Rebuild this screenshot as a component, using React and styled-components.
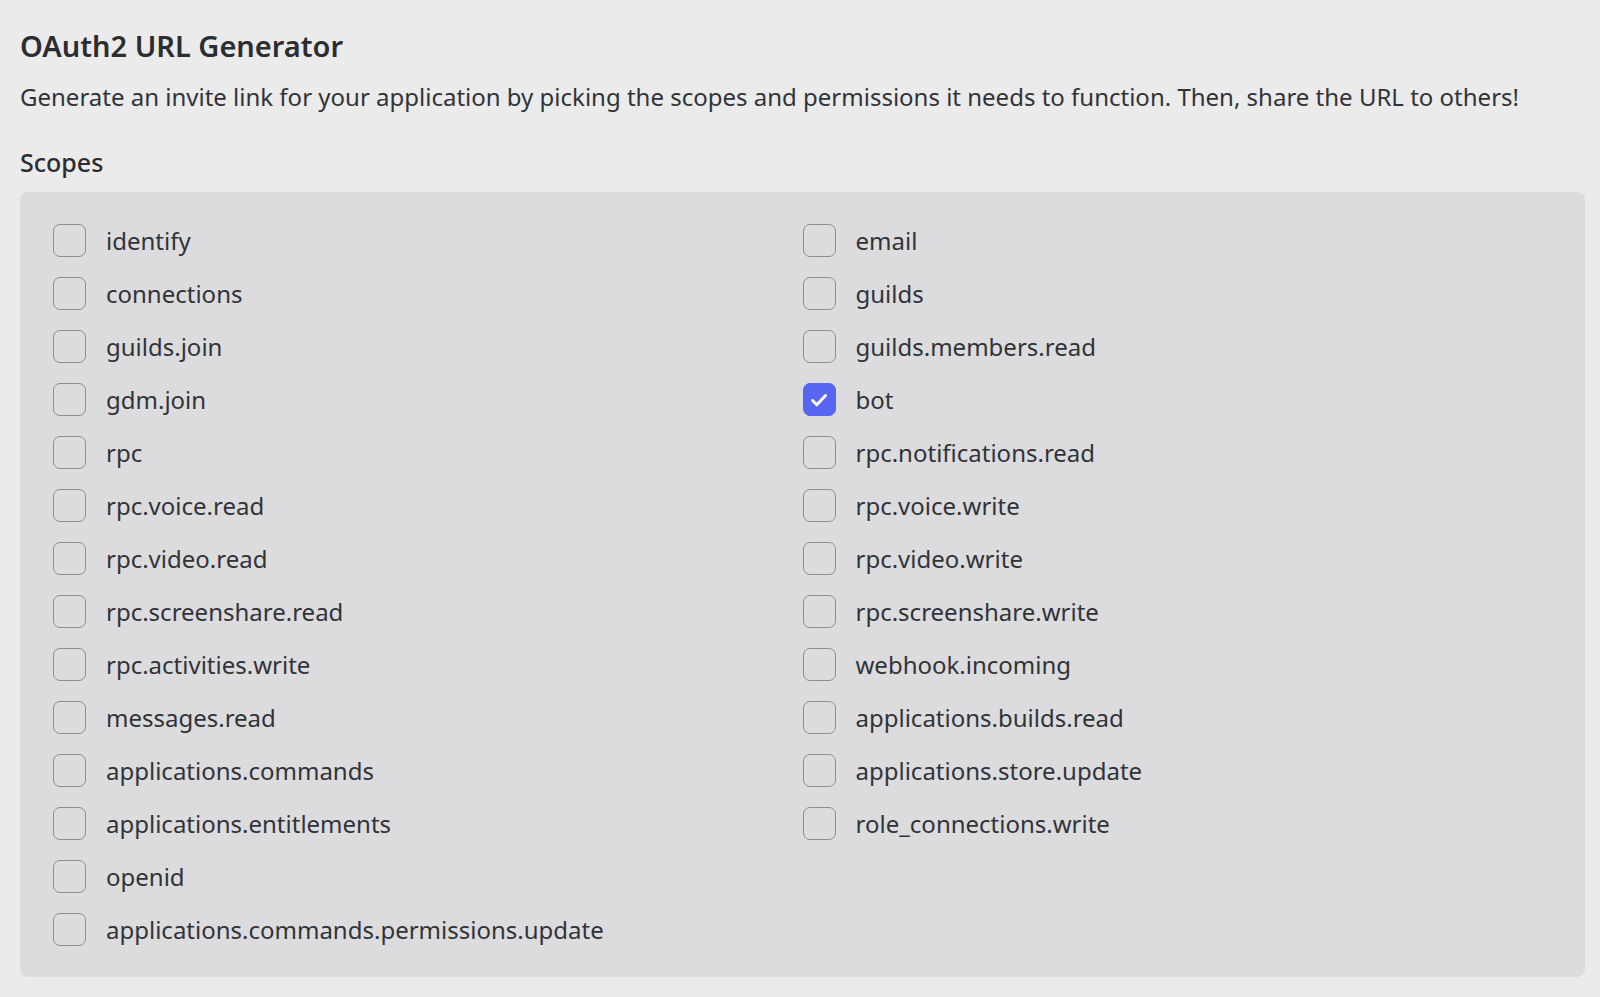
import React from "react";
import styled, { createGlobalStyle } from "styled-components";

const Global = createGlobalStyle`
  html, body { margin: 0; padding: 0; background: #ebebeb; }
  body { font-family: "Noto Sans", "Open Sans", sans-serif; color: #313338; }
`;

const Page = styled.div`
  padding: 28px 15px 20px 20px;
  display: flex;
  flex-direction: column;
`;

const Title = styled.h1`
  margin: 0;
  font-size: 29px;
  font-weight: 600;
  line-height: 36px;
  color: #2b2d31;
`;

const Description = styled.p`
  margin: 17px 0 0;
  font-size: 24px;
  line-height: 32px;
  color: #313338;
`;

const SectionLabel = styled.h2`
  margin: 33px 0 0;
  font-size: 25px;
  font-weight: 500;
  line-height: 32px;
  color: #2b2d31;
`;

const Panel = styled.div`
  margin-top: 14px;
  background: #dcdcde;
  border-radius: 8px;
  padding: 32px 33px 31px;
  display: grid;
  grid-template-columns: 1fr 1fr;
  row-gap: 20px;
`;

const Row = styled.label`
  display: flex;
  align-items: center;
  gap: 20px;
  height: 33px;
  font-size: 24px;
  color: #313338;
`;

const Box = styled.span`
  width: 33px;
  height: 33px;
  box-sizing: border-box;
  border-radius: 7px;
  border: 1.5px solid ${(p) => (p.$checked ? "#5865f2" : "#8d8e93")};
  background: ${(p) => (p.$checked ? "#5865f2" : "#dcdcde")};
  display: flex;
  align-items: center;
  justify-content: center;
  flex-shrink: 0;
`;

const Empty = styled.span``;

const left = [
  "identify",
  "connections",
  "guilds.join",
  "gdm.join",
  "rpc",
  "rpc.voice.read",
  "rpc.video.read",
  "rpc.screenshare.read",
  "rpc.activities.write",
  "messages.read",
  "applications.commands",
  "applications.entitlements",
  "openid",
  "applications.commands.permissions.update",
];
const right = [
  "email",
  "guilds",
  "guilds.members.read",
  "bot",
  "rpc.notifications.read",
  "rpc.voice.write",
  "rpc.video.write",
  "rpc.screenshare.write",
  "webhook.incoming",
  "applications.builds.read",
  "applications.store.update",
  "role_connections.write",
];

function Check({ label, checked }) {
  return (
    <Row>
      <Box $checked={checked}>
        {checked && (
          <svg width="24" height="24" viewBox="0 0 24 24" fill="none">
            <path d="M5.5 12.5l4.3 4.3 8.7-9.3" stroke="#fff" strokeWidth="3" strokeLinecap="round" strokeLinejoin="round" />
          </svg>
        )}
      </Box>
      {label}
    </Row>
  );
}

export default function App() {
  const cells = [];
  for (let i = 0; i < left.length; i++) {
    cells.push(<Check key={"l" + i} label={left[i]} />);
    if (right[i]) cells.push(<Check key={"r" + i} label={right[i]} checked={right[i] === "bot"} />);
    else cells.push(<Empty key={"r" + i} />);
  }
  return (
    <>
      <Global />
      <Page>
        <Title>OAuth2 URL Generator</Title>
        <Description>
          Generate an invite link for your application by picking the scopes and permissions it needs to function. Then, share the URL to others!
        </Description>
        <SectionLabel>Scopes</SectionLabel>
        <Panel>{cells}</Panel>
      </Page>
    </>
  );
}
